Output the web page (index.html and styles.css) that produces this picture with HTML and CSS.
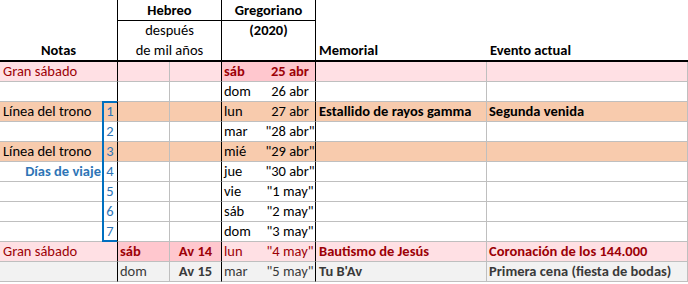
FILE: index.html
```html
<!DOCTYPE html>
<html lang="es">
<head>
<meta charset="utf-8">
<link rel="stylesheet" href="styles.css">
</head>
<body>
<div class="sheet">
  <div class="hd h-notas">Notas</div>
  <div class="hd h-cal bl">Hebreo</div>
  <div class="hd h-cal bl">Gregoriano</div>
  <div class="hd h-side">Memorial</div>
  <div class="hd h-side">Evento actual</div>
  <div class="hd h-sub normal">después</div>
  <div class="hd h-sub">(2020)</div>
  <div class="hd h-sub normal thick">de mil años</div>
  <div class="hd h-sub thick"></div>

  <!-- 25 abr -->
  <div class="c a pink red">Gran sábado</div>
  <div class="c b pink"></div>
  <div class="c hc pink"></div>
  <div class="c hd2 pink"></div>
  <div class="c wd pinkd red b-txt">sáb</div>
  <div class="c dt pinkd red b-txt">25 abr</div>
  <div class="c mem pink"></div>
  <div class="c ev pink"></div>

  <!-- 26 abr -->
  <div class="c a"></div>
  <div class="c b"></div>
  <div class="c hc"></div>
  <div class="c hd2"></div>
  <div class="c wd">dom</div>
  <div class="c dt">26 abr</div>
  <div class="c mem"></div>
  <div class="c ev"></div>

  <!-- 27 abr -->
  <div class="c a orange">Línea del trono</div>
  <div class="c b orange num">1</div>
  <div class="c hc orange"></div>
  <div class="c hd2 orange"></div>
  <div class="c wd orange">lun</div>
  <div class="c dt orange">27 abr</div>
  <div class="c mem orange b-txt">Estallido de rayos gamma</div>
  <div class="c ev orange b-txt">Segunda venida</div>

  <!-- 28 abr -->
  <div class="c a"></div>
  <div class="c b num">2</div>
  <div class="c hc"></div>
  <div class="c hd2"></div>
  <div class="c wd">mar</div>
  <div class="c dt">"28 abr"</div>
  <div class="c mem"></div>
  <div class="c ev"></div>

  <!-- 29 abr -->
  <div class="c a orange">Línea del trono</div>
  <div class="c b orange num">3</div>
  <div class="c hc orange"></div>
  <div class="c hd2 orange"></div>
  <div class="c wd orange">mié</div>
  <div class="c dt orange">"29 abr"</div>
  <div class="c mem orange"></div>
  <div class="c ev orange"></div>

  <!-- 30 abr -->
  <div class="c a travel">Días de viaje</div>
  <div class="c b num">4</div>
  <div class="c hc"></div>
  <div class="c hd2"></div>
  <div class="c wd">jue</div>
  <div class="c dt">"30 abr"</div>
  <div class="c mem"></div>
  <div class="c ev"></div>

  <!-- 1 may -->
  <div class="c a"></div>
  <div class="c b num">5</div>
  <div class="c hc"></div>
  <div class="c hd2"></div>
  <div class="c wd">vie</div>
  <div class="c dt">"1 may"</div>
  <div class="c mem"></div>
  <div class="c ev"></div>

  <!-- 2 may -->
  <div class="c a"></div>
  <div class="c b num">6</div>
  <div class="c hc"></div>
  <div class="c hd2"></div>
  <div class="c wd">sáb</div>
  <div class="c dt">"2 may"</div>
  <div class="c mem"></div>
  <div class="c ev"></div>

  <!-- 3 may -->
  <div class="c a"></div>
  <div class="c b num">7</div>
  <div class="c hc"></div>
  <div class="c hd2"></div>
  <div class="c wd">dom</div>
  <div class="c dt">"3 may"</div>
  <div class="c mem"></div>
  <div class="c ev"></div>

  <!-- 4 may -->
  <div class="c a pink red">Gran sábado</div>
  <div class="c b pink"></div>
  <div class="c hc pinkd red b-txt">sáb</div>
  <div class="c hd2 pinkd red b-txt">Av 14</div>
  <div class="c wd pink red">lun</div>
  <div class="c dt pink red">"4 may"</div>
  <div class="c mem pink red b-txt">Bautismo de Jesús</div>
  <div class="c ev pink red b-txt">Coronación de los 144.000</div>

  <!-- 5 may -->
  <div class="c a grey"></div>
  <div class="c b grey"></div>
  <div class="c hc grey">dom</div>
  <div class="c hd2 grey b-txt">Av 15</div>
  <div class="c wd grey">mar</div>
  <div class="c dt grey">"5 may"</div>
  <div class="c mem grey b-txt">Tu B'Av</div>
  <div class="c ev grey b-txt">Primera cena (fiesta de bodas)</div>

  <div class="travel-box"></div>
</div>
</body>
</html>
```

FILE: styles.css
```css
html, body {
  margin: 0;
  padding: 0;
  background: #ffffff;
}

.sheet {
  position: relative;
  display: grid;
  grid-template-columns: 103px 15px 52px 52px 36px 58px 171px 201px;
  grid-template-rows: 21px 20px 21px repeat(11, 20px);
  width: 688px;
  font-family: Carlito, Lato, "Liberation Sans", sans-serif;
  font-size: 14.5px;
  color: #000000;
}

.sheet > div {
  box-sizing: border-box;
  white-space: nowrap;
  overflow: visible;
  line-height: 19px;
}

/* header */
.hd {
  font-weight: bold;
  text-align: center;
}
.hd.normal { font-weight: normal; }

.h-notas {
  grid-column: span 2;
  grid-row: span 3;
  border-right: 1px solid #000;
  border-bottom: 2px solid #000;
  display: flex;
  align-items: flex-end;
  justify-content: center;
}
.h-cal {
  grid-column: span 2;
  border-right: 1px solid #000;
  border-bottom: 1px solid #000;
  padding-top: 1px;
}
.h-side {
  grid-row: span 3;
  border-bottom: 2px solid #000;
  display: flex;
  align-items: flex-end;
  padding-left: 3px;
  text-align: left;
}
.h-sub {
  grid-column: span 2;
  border-right: 1px solid #000;
}
.h-sub.thick {
  border-bottom: 2px solid #000;
}

/* data cells */
.c {
  border-bottom: 1px solid #bfbfbf;
}
.a { padding-left: 3px; }
.b { border-right: 1px solid #000; text-align: center; }
.hc { border-right: 1px solid #bfbfbf; padding-left: 2px; }
.hd2 { border-right: 1px solid #000; text-align: center; }
.wd { padding-left: 2px; }
.dt { border-right: 1px solid #000; text-align: center; padding-left: 7px; }
.mem { border-right: 1px solid #bfbfbf; padding-left: 3px; }
.ev { border-right: 1px solid #bfbfbf; padding-left: 2px; }

.b-txt { font-weight: bold; }

.pink { background: #ffe0e4; }
.pinkd { background: #ffc7ce; }
.orange { background: #f8cbad; }
.grey { background: #f2f2f2; color: #3a3a3a; }
.red { color: #9c0006; }

.num { color: #2e75b6; }
.travel {
  color: #2e75b6;
  font-weight: bold;
  text-align: right;
  padding-right: 2px;
}

.travel-box {
  position: absolute;
  left: 102px;
  top: 101px;
  width: 15px;
  height: 141px;
  box-sizing: border-box;
  border: 2px solid #0070c0;
  border-right: none;
  pointer-events: none;
}
```
